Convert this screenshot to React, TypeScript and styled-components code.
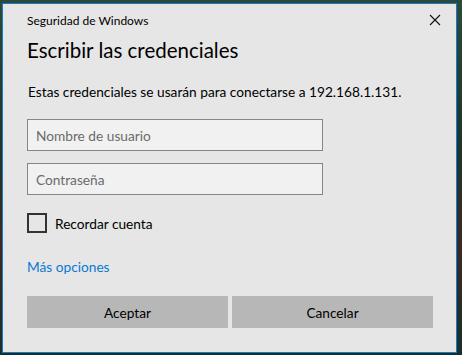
import React from 'react';
import styled, {createGlobalStyle} from 'styled-components';

const GlobalStyle = createGlobalStyle`
  html, body {
    margin: 0;
    padding: 0;
    width: 462px;
    height: 355px;
    overflow: hidden;
    background: linear-gradient(180deg, #2c4a3c 0%, #1c3530 40%, #3a2a24 70%, #16302e 100%);
  }
`;

const Page = styled.div`
  padding: 3px 0 0 2px;
`;

const Dialog = styled.div`
  box-sizing: border-box;
  width: 455px;
  height: 350px;
  background: #e6e6e6;
  border: 1px solid #1a79c9;
  padding: 0 15px 0 24px;
  font-family: Lato, "Noto Sans", sans-serif;
  color: #000;
  display: flex;
  flex-direction: column;
`;

const TitleBar = styled.div`
  display: flex;
  align-items: center;
  justify-content: space-between;
  height: 32px;
`;

const TitleText = styled.span`
  font-size: 12px;
`;

const CloseButton = styled.button`
  border: none;
  background: none;
  padding: 0;
  width: 12px;
  height: 12px;
  display: flex;
  align-items: center;
  justify-content: center;
  cursor: pointer;
`;

const Heading = styled.h1`
  margin: 0;
  font-size: 20.5px;
  font-weight: 400;
  line-height: 28px;
`;

const Description = styled.p`
  margin: 18px 0 0 1px;
  font-size: 13.7px;
  line-height: 20px;
  white-space: nowrap;
`;

const Field = styled.input<{ $top: number }>`
  box-sizing: border-box;
  display: block;
  width: 296px;
  height: 32px;
  margin: ${p => p.$top}px 0 0 0;
  padding: 0 8px;
  background: #f1f1f1;
  border: 1px solid #868686;
  font-family: inherit;
  font-size: 13.7px;
  color: #000;
  outline: none;
  &::placeholder {
    color: #6b6b6b;
  }
`;

const CheckRow = styled.label`
  display: flex;
  align-items: center;
  gap: 8px;
  margin: 18px 0 0 0;
  font-size: 13.7px;
  height: 20px;
  cursor: pointer;
`;

const Box = styled.span`
  box-sizing: border-box;
  width: 20px;
  height: 20px;
  border: 2px solid #333;
`;

const MoreLink = styled.a`
  display: block;
  align-self: flex-start;
  margin: 24px 0 0 0;
  font-size: 13.7px;
  line-height: 20px;
  color: #0a78d4;
  text-decoration: none;
`;

const Buttons = styled.div`
  display: flex;
  gap: 4px;
  margin: 19px 0 0 0;
  width: 406px;
`;

const Button = styled.button`
  flex: 1;
  height: 32px;
  border: none;
  background: #b7b7b7;
  font-family: inherit;
  font-size: 13.7px;
  color: #000;
  cursor: pointer;
`;

const App = () => {
    return (
        <>
            <GlobalStyle/>
            <Page>
                <Dialog>
                    <TitleBar>
                        <TitleText>Seguridad de Windows</TitleText>
                        <CloseButton aria-label="Cerrar">
                            <svg width="12" height="12" viewBox="0 0 12 12">
                                <path d="M1 1 L11 11 M11 1 L1 11" stroke="#111" strokeWidth="1.1"/>
                            </svg>
                        </CloseButton>
                    </TitleBar>
                    <Heading>Escribir las credenciales</Heading>
                    <Description>Estas credenciales se usarán para conectarse a 192.168.1.131.</Description>
                    <Field $top={17} placeholder="Nombre de usuario"/>
                    <Field $top={12} type="password" placeholder="Contraseña"/>
                    <CheckRow>
                        <Box/>
                        Recordar cuenta
                    </CheckRow>
                    <MoreLink href="#">Más opciones</MoreLink>
                    <Buttons>
                        <Button>Aceptar</Button>
                        <Button>Cancelar</Button>
                    </Buttons>
                </Dialog>
            </Page>
        </>
    );
};

export default App;
